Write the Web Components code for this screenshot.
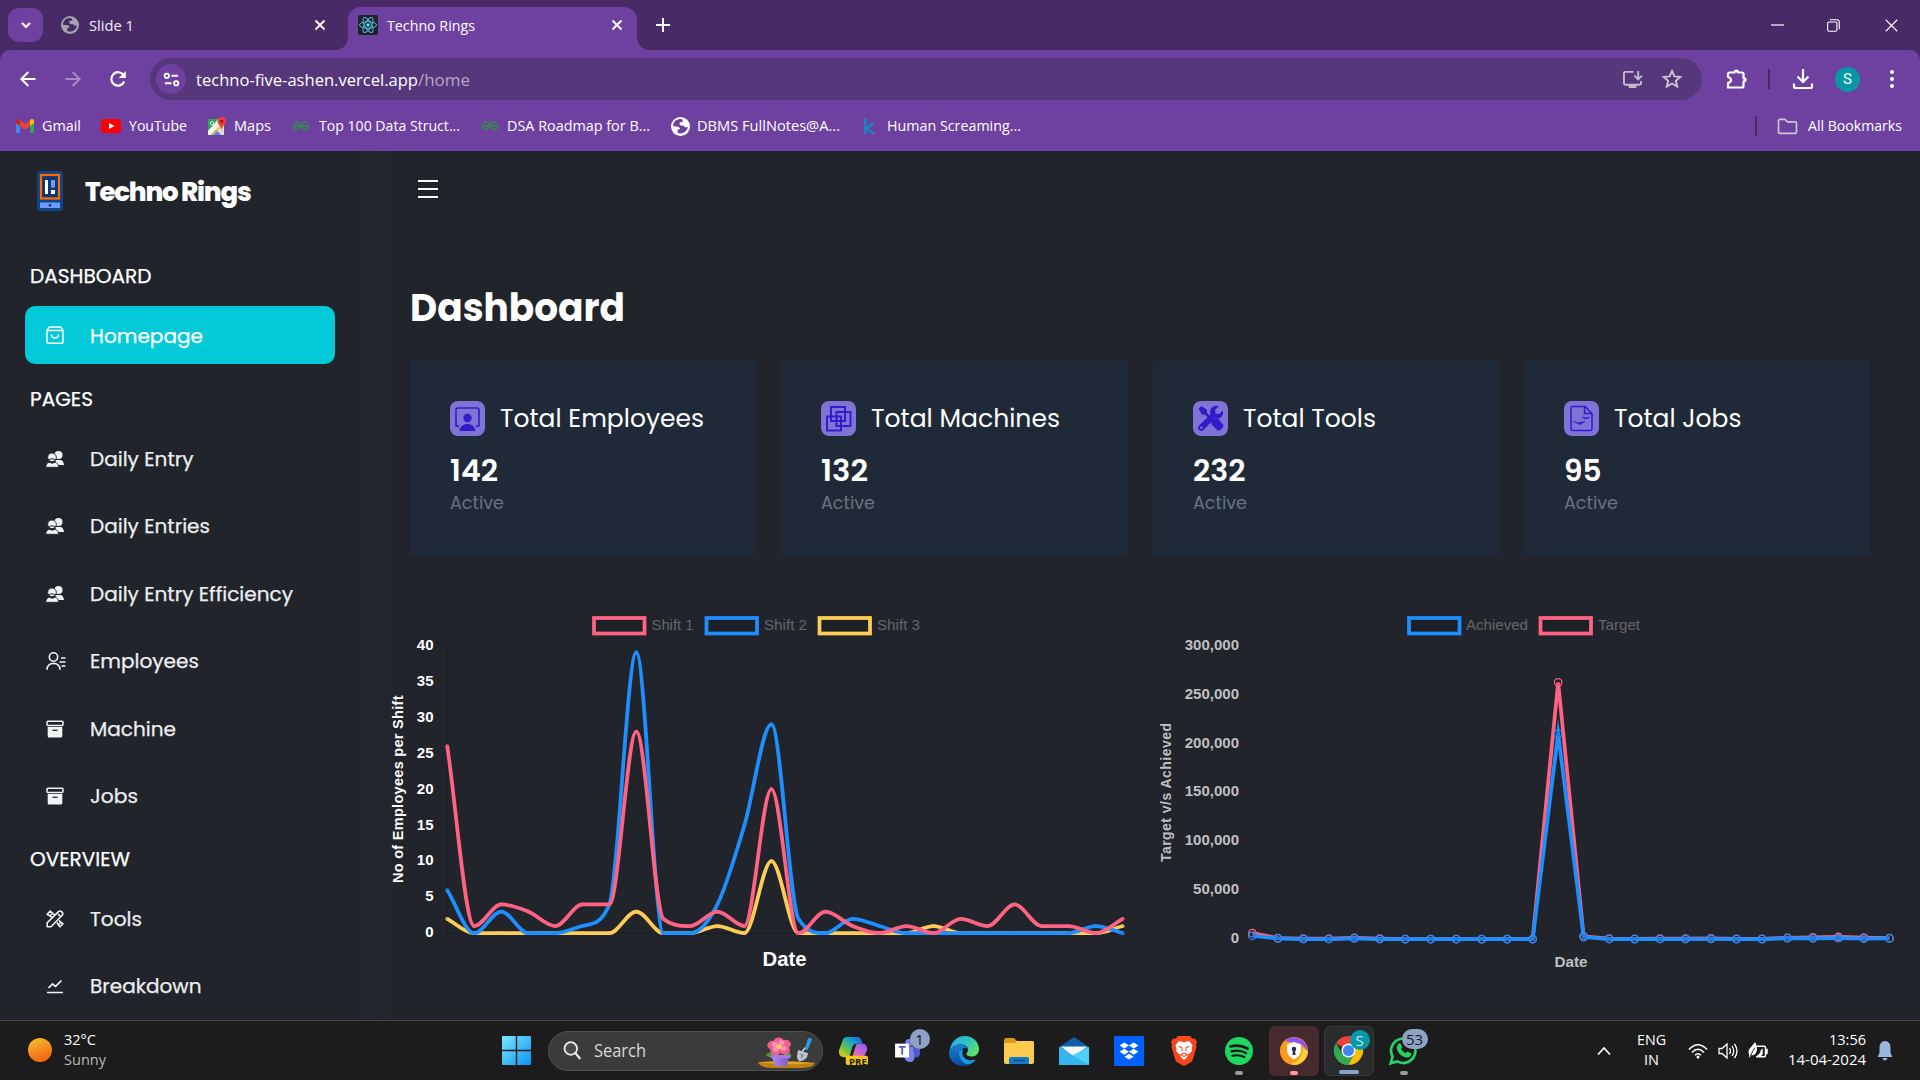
<!DOCTYPE html>
<html lang="en">
<head>
<meta charset="utf-8">
<title>Techno Rings</title>
<style>
html,body{margin:0;padding:0;width:1920px;height:1080px;overflow:hidden;background:#21242b}
</style>
</head>
<body>
<desktop-screen></desktop-screen>
<script>
const define = (name, html, setup) => customElements.define(name, class extends HTMLElement {
  connectedCallback() {
    if (this.shadowRoot) return;
    const root = this.attachShadow({ mode: 'open' });
    root.innerHTML = typeof html === 'function' ? html(this) : html;
    if (setup) setup(this, root);
  }
});

/* Text squeezed or stretched to an exact advance width */
define('fit-text', `<style>:host{display:inline-block;white-space:nowrap;flex:none}span{display:inline-block;transform-origin:0 50%}</style><span><slot></slot></span>`,
  (el, root) => {
    const s = root.querySelector('span'), w = +el.getAttribute('w');
    const n = s.offsetWidth;
    el.style.width = w + 'px';
    if (n) s.style.transform = `scaleX(${w / s.getBoundingClientRect().width})`;
  });

const ICONS = {
  chevdown: ['0 0 20 20', `<path d="M6 8l4 4 4-4" fill="none" stroke="#fff" stroke-width="2.2"/>`],
  globe: ['0 0 20 20', `<circle cx="10" cy="10" r="10" fill="currentColor"/><path d="M9.5 2.2C5 2.300 2.200 6 2.200 9.800L6 10c2 .2 3.500 1 3.500 3H7v3.700c4 2 10-1 10.700-6.200-2 .8-4 .3-4.500-1.500-2.500.5-4.700-.5-4.200-2.500.3-1.500 2-1 3.500-1.500 0-1.200-.5-2-1-2.600z" fill="var(--cut,#472a66)"/>`],
  close: ['0 0 12 12', `<path d="M1.500 1.500l9 9m0-9l-9 9" stroke="#fff" stroke-width="1.900"/>`],
  plus: ['0 0 14 14', `<path d="M7 0v14M0 7h14" stroke="#fff" stroke-width="2"/>`],
  react: ['0 0 20 20', `<rect width="20" height="20" rx="2" fill="#20232a"/><g fill="none" stroke="#53c1de" stroke-width="1"><ellipse cx="10" cy="10" rx="8.500" ry="3.300"/><ellipse cx="10" cy="10" rx="8.500" ry="3.300" transform="rotate(60 10 10)"/><ellipse cx="10" cy="10" rx="8.500" ry="3.300" transform="rotate(120 10 10)"/></g><circle cx="10" cy="10" r="1.700" fill="#61dafb"/>`],
  back: ['0 0 16 16', `<path d="M15.500 8H1.500M8.300 1L1.400 8l6.900 7" fill="none" stroke="currentColor" stroke-width="2.100"/>`],
  fwd: ['0 0 16 16', `<path d="M.5 8h14M7.700 1l6.900 7-6.900 7" fill="none" stroke="currentColor" stroke-width="2"/>`],
  reload: ['0 0 18 18', `<path d="M15.200 11.500A6.700 6.700 0 1 1 14.600 5.200" fill="none" stroke="#fff" stroke-width="2.200"/><path d="M16.800 1v7h-7z" fill="#fff"/>`],
  tune: ['0 0 18 16', `<g fill="none" stroke="#fff" stroke-width="2"><circle cx="4" cy="4" r="2.300"/><path d="M9 4h7M2 12h7"/><circle cx="14" cy="12" r="2.300"/></g>`],
  install: ['0 0 22 20', `<g fill="none" stroke="#c3bcca" stroke-width="2"><path d="M12 2H3.500Q2 2 2 3.500V14q0 1.500 1.500 1.500h15Q20 15.500 20 14v-2.500"/><path d="M17 1v8.500M13 6l4 4 4-4"/></g><path d="M7 15.500h8V19H7z" fill="#c3bcca"/>`],
  star: ['0 0 20 20', `<path d="M10 2l2.400 5.400 5.900.5-4.500 3.900 1.400 5.800-5.200-3.100-5.200 3.100 1.400-5.800L1.700 7.900l5.900-.5z" fill="none" stroke="#cbc6d0" stroke-width="1.900"/>`],
  puzzle: ['0 0 22 22', `<path d="M3.500 4.500h4.700a2.200 2.200 0 0 1 4.200 0h3.600Q17.500 4.500 17.500 6v3.600a2.200 2.200 0 0 1 0 4.200V18q0 1.500-1.500 1.500H2V15q3-.8 3-3T2 9V6q0-1.500 1.500-1.500z" fill="none" stroke="#fff" stroke-width="2.200"/><path d="M8 4.500c0-4 5-4 5 0zM17.500 9.500c4.500 0 4.500 4.500 0 4.500z" fill="#fff"/>`],
  download: ['0 0 20 20', `<path d="M10 0v12.500M4.500 7.500l5.500 5.500 5.500-5.500M1 14.500v3Q1 19 2.500 19h15q1.500 0 1.500-1.500v-3" fill="none" stroke="#fff" stroke-width="2.200"/>`],
  dots: ['0 0 6 20', `<g fill="#fff"><circle cx="3" cy="3" r="2"/><circle cx="3" cy="10" r="2"/><circle cx="3" cy="17" r="2"/></g>`],
  min: ['0 0 14 14', `<path d="M0 7h13" stroke="#fff" stroke-width="1.200"/>`],
  max: ['0 0 14 14', `<rect x=".7" y="3.200" width="10" height="10" rx="1.500" fill="none" stroke="#fff" stroke-width="1.200"/><path d="M3 .8h7.500Q13.200.8 13.200 3.500V11" fill="none" stroke="#fff" stroke-width="1.200"/>`],
  winclose: ['0 0 14 14', `<path d="M.8.8l12.400 12.400m0-12.400L.8 13.200" stroke="#fff" stroke-width="1.200"/>`],
  gmail: ['0 0 18 14', `<path d="M0 2.200V12.500q0 1.500 1.500 1.500H4V5z" fill="#4285f4"/><path d="M18 2.200V12.500q0 1.500-1.500 1.500H14V5z" fill="#34a853"/><path d="M4 1.200V7l5 3.800L14 7V1.200L9 5z" fill="#ea4335"/><path d="M0 2.200v2L4 7V1.200l-.8-.7C2-.4 0 .3 0 2.200z" fill="#c5221f"/><path d="M18 2.200v2L14 7V1.200l.8-.7C16-.4 18 .3 18 2.200z" fill="#fbbc04"/>`],
  youtube: ['0 0 20 14', `<rect width="20" height="14" rx="3" fill="#f00"/><path d="M8 4l5.500 3L8 10z" fill="#fff"/>`],
  maps: ['0 0 18 18', `<rect y="2" width="16" height="16" rx="1" fill="#ece9e6"/><path d="M0 3q0-1 1-1h9L0 14z" fill="#2fa457"/><path d="M0 14L11 4l2 2L2 18H1q-1 0-1-1z" fill="#f6f5f1"/><path d="M12.500 8L16 12v5q0 1-1 1h-3L8 12.500z" fill="#dcd9d6"/><path d="M8 12.500L13 18H3z" fill="#4285f4"/><path d="M5.800 14.800L13.500 7l1.500 1.800L5.500 18H2.600z" fill="#fbc02d" opacity=".75"/><path d="M13.700 0a4.200 4.200 0 0 0-4.200 4.200c0 3 3.200 4.300 4.200 8.300 1-4 4.200-5.300 4.200-8.300A4.200 4.200 0 0 0 13.700 0z" fill="#ea4335"/><circle cx="13.700" cy="4.200" r="1.500" fill="#8b1a12"/><circle cx="4" cy="6.200" r="1.700" fill="none" stroke="#fff" stroke-width=".8"/>`],
  gfg: ['0 0 18 10', `<g fill="none" stroke="#2f8d46" stroke-width="1.500"><path d="M2 2.500C5-.5 8.500 1.500 8 5c-.5 4-5.500 4.500-6.600 1.200-.2-.5-.4-1 .1-1.200h15c.5.200.3.700.1 1.200C15.500 9.500 10.500 9 10 5c-.5-3.500 3-5.500 6-2.500"/></g>`],
  kag: ['0 0 12 18', `<path d="M1.500 0v18M10.500 5.500L3 12l8 5.500" fill="none" stroke="#128fc0" stroke-width="2.300"/>`],
  folder: ['0 0 22 18', `<path d="M1.500 3q0-1.500 1.500-1.500h5.500l2.500 2.700h8q1.500 0 1.500 1.500v9q0 1.500-1.500 1.500H3q-1.500 0-1.500-1.500z" fill="none" stroke="#cbc6d0" stroke-width="1.800"/>`],
  brand: ['0 0 26 40', `<rect width="26" height="40" rx="3" fill="#0f4487"/><rect x="4" y="4" width="18" height="23.500" fill="none" stroke="#ff6a00" stroke-width="2.200"/><rect x="5.500" y="5.500" width="15" height="20.500" fill="#12366b"/><path d="M8 9h3v14H8z" fill="#fff"/><path d="M14 9h4v7.500h-4z" fill="#6a9bff"/><path d="M14 19h4v4h-4z" fill="#fff"/><rect x="3" y="31.500" width="20" height="5.500" fill="#6a9bff"/><circle cx="13" cy="34.300" r="1.400" fill="#12366b"/>`],
  menu: ['0 0 20 18', `<path d="M0 1h20M0 9h20M0 17h20" stroke="#fff" stroke-width="1.800"/>`],
  bag: ['0 0 18 18', `<g fill="none" stroke="#fff" stroke-width="1.500"><path d="M3.500 1h11L17 4.300V16q0 1.200-1.200 1.200H2.200Q1 17.200 1 16V4.300z"/><path d="M1 4.500h16M5.400 8.300a3.600 3.600 0 0 0 7.200 0"/></g>`],
  people: ['0 0 18 18', `<g fill="#f2f3f5"><circle cx="12.500" cy="5" r="4"/><path d="M9.500 10h5.500q2.500 1 3 5H10z"/></g><g fill="#f2f3f5" stroke="#21242b" stroke-width=".9"><circle cx="6" cy="7.300" r="4.300"/><path d="M-.3 17.300c.3-3.300 1.500-4.300 3.500-5q3 1.700 6 0c2 .7 3.200 1.700 3.500 5z"/></g><path d="M3.200 9.500q2.800-1.500 5.600 0" stroke="#21242b" stroke-width="1" fill="none"/>`],
  userlist: ['0 0 20 18', `<g fill="none" stroke="#f2f3f5" stroke-width="1.600"><circle cx="7.500" cy="5" r="4.200"/><path d="M1 17.700c0-8.500 13-8.500 13 0M15 6h4.500M13.500 10h6M15.500 14h4"/></g>`],
  archive: ['0 0 18 18', `<path d="M1.700 7h14.600v9q0 1.500-1.500 1.500H3.200q-1.500 0-1.500-1.500z" fill="#f2f3f5"/><rect x="1" y="1.300" width="16" height="4.200" rx="1" fill="none" stroke="#f2f3f5" stroke-width="1.500"/><path d="M6.500 10.300h5" stroke="#21242b" stroke-width="1.300"/>`],
  tools: ['0 0 18 18', `<g fill="none" stroke="#f2f3f5" stroke-width="1.600" stroke-linejoin="round"><path d="M1.200 16.800v-4L12.500 1.600q1.600-1.300 3.300.2t.4 3.400L5 16.800z"/><path d="M6.500 7.500L1.200 4.200 4.200 1l4.600 4.300M3.800 6l2-2M10.800 12.500L14 16.800l3-3-4.300-3.300M12.500 14.500l2.300-2.300M12 4l2.500 2.500"/></g>`],
  trend: ['0 0 18 18', `<path d="M1 15.500h16M2.500 11l4-4 3 2.300 6-5.800" fill="none" stroke="#f2f3f5" stroke-width="1.700"/>`],
  c1: ['0 0 35 35', `<path d="M7 25.500q-1 0-1-1V9q0-2 2-2h19q2 0 2 2v15.500q0 1-1 1" fill="none" stroke="#301cc9" stroke-width="1.600"/><circle cx="17.500" cy="17" r="4.200" fill="#301cc9"/><path d="M9.500 30c.5-9.500 15.500-9.500 16 0zM6 24h3v3zM29 24h-3v3z" fill="#301cc9"/>`],
  c2: ['0 0 35 35', `<g fill="none" stroke="#301cc9" stroke-width="1.900"><rect x="10" y="6" width="14" height="14"/><rect x="15.500" y="11" width="14" height="14"/><rect x="6" y="15.500" width="14" height="14"/></g>`],
  c3: ['0 0 35 35', `<g fill="#301cc9"><path d="M5.500 7.500L8.500 5l5.500 3.700v3l4.200 4.200-2 2L12 13.700H9z"/><path d="M18.500 19.500l3-2q3-.5 4.500 1l4 5q1 2-1.500 4.500t-4.500 1l-5-5q-1.500-2-.5-4.500z"/><path d="M29.800 9.500q1 4-1.500 6.500t-6.500 1.300L10.500 29q-2.500 2-4.500 0t0-4.500L17.500 13.500Q16.200 9 18.800 6.500T26 5l-4 4 .5 3.500 3.500.5z"/></g><circle cx="8.300" cy="26.800" r="1.300" fill="#8073d6"/>`],
  c4: ['0 0 35 35', `<path d="M7 7q0-1.500 1.500-1.500h12.500l7 7V28q0 1.500-1.500 1.500h-18Q7 29.500 7 28zM20.500 5.500V12.500H28" fill="none" stroke="#301cc9" stroke-width="1.500"/><path d="M9.500 20.500l5 1.500 2-1 4.500-.3-2.500 1.300-2 1.700-3-1.200zM18 16.300l3.500.4 4-.5-2 1.500-2.500.2z" fill="#301cc9" stroke="#301cc9" stroke-width=".6"/>`],
  win: ['0 0 29 29', `<defs><linearGradient id="w" x2="1" y2="1"><stop stop-color="#7ce7fd"/><stop offset="1" stop-color="#0b93f2"/></linearGradient></defs><path d="M0 1q0-1 1-1h12.800v13.800H0zM15.200 0H28q1 0 1 1v12.800H15.200zM0 15.200h13.800V29H1q-1 0-1-1zM15.200 15.200H29V28q0 1-1 1H15.200z" fill="url(#w)"/>`],
  search: ['0 0 18 19', `<circle cx="7.800" cy="7.500" r="6.300" fill="#4a4a4a" stroke="#eee" stroke-width="1.800"/><path d="M12.300 12l5 6" stroke="#eee" stroke-width="2"/>`],
  flower: ['0 0 58 38" preserveAspectRatio="none', `<defs><linearGradient id="p" x2="1"><stop stop-color="#b18cf2"/><stop offset="1" stop-color="#7a52c8"/></linearGradient></defs><path d="M0 31q27-3 58 1-1 6-14 6H14Q2 37.500 0 31z" fill="#c0820f"/><path d="M0 31q27-3 58 1-20 3-58-1z" fill="#dda22b"/><path d="M8 21q6-5 10 3-7 3-10-3zM34 24q-1-7-6-7l-3 8z" fill="#4a9c33"/><path d="M14 24h18l-3 12H17z" fill="url(#p)"/><rect x="13" y="22" width="20" height="4" rx="1" fill="#a47ce8"/><g fill="#ee5f8c"><circle cx="15" cy="10" r="5.500"/><circle cx="21" cy="6" r="5.500"/><circle cx="28" cy="9" r="5.500"/><circle cx="27" cy="16" r="5.500"/><circle cx="18" cy="17" r="5.500"/></g><g fill="#f993b4"><circle cx="17" cy="9" r="3"/><circle cx="24" cy="7" r="3"/><circle cx="26" cy="14" r="3"/><circle cx="18" cy="15" r="3"/></g><circle cx="21.500" cy="12" r="2.700" fill="#ffd15c"/><path d="M47.500 15l3-12q1-2.500 3-1.500t1 3L50.500 16z" fill="#2c9be6"/><path d="M41 16l10 4q-1 9-9 10-4-5-1-14z" fill="#bfc6cc"/><path d="M43 20l4 2-3 6z" fill="#8b949c"/><path d="M45 18l3-5" stroke="#ddd" stroke-width="1.500"/>`],
  copilot: ['0 0 30 30', `<defs><linearGradient id="c1" x1="0" y1="1" x2="1" y2="0"><stop stop-color="#ffcf00"/><stop offset=".35" stop-color="#6cc148"/><stop offset=".65" stop-color="#16a6cf"/><stop offset="1" stop-color="#2354d8"/></linearGradient><linearGradient id="c2" x1="1" y1="0" x2="0" y2="1"><stop stop-color="#7a63f0"/><stop offset=".5" stop-color="#d863cf"/><stop offset="1" stop-color="#ff7a59"/></linearGradient></defs><path d="M8 1h11q3 0 4 3l1.500 4H18q-3 0-4 3l-3.500 11H5q-6-1-5-7L4 4q1-3 4-3z" fill="url(#c1)"/><path d="M19 8h6q5 1 4 7l-3 6q-1 4-5 4H9q4-1 5-4l3-10q.5-2.500 2-3z" fill="url(#c2)"/><rect x="7" y="20.500" width="23" height="9.500" rx="2" fill="#f5c518"/>`],
  teams: ['0 0 28 26', `<circle cx="15" cy="4" r="4" fill="#7b83eb"/><path d="M10 8h11v13q-1 4-5 4t-6-5z" fill="#7b83eb"/><path d="M19 8h8v8q-1 5-6 4z" fill="#5059c9"/><rect y="5" width="15" height="15" fill="#fff"/><path d="M4 8.500h7.400M7.700 8.500V17" stroke="#5059c9" stroke-width="2"/>`],
  edge: ['0 0 30 30', `<defs><linearGradient id="e1" x2="1" y2=".6"><stop stop-color="#2aa9e8"/><stop offset=".55" stop-color="#2dc2c4"/><stop offset="1" stop-color="#5ee06a"/></linearGradient><linearGradient id="e2" y2="1" x2=".2"><stop stop-color="#1785d8"/><stop offset="1" stop-color="#0b4a98"/></linearGradient></defs><path d="M1 13C3 4 9 0 15.500 0 24 0 30 6 30 13c0 5-3.500 7.500-7.500 7.500-3.500 0-5-1-5-2.500s1.500-1.500 1.500-4.500c0-3-3-5-7-5C6 8.500 2 11 1 15z" fill="url(#e1)"/><path d="M12.500 8.500C5 8.500 0 12 0 17.500 0 25 7 30 14 30c5 0 10-2 12.500-6-3 1.500-9 2-12.500-1.500-3.500-3-3-9 1.500-10.500 2-.5 3.500 1 3.500 2-.5-3-3-5.500-6.500-5.500z" fill="url(#e2)"/><path d="M10 16c0 5 3 12 9.500 12.300 3-1 5.500-2.300 7-4.800-3 1.500-8.500 1-11.500-2-2-2-2-5.500-1-7.500-2 0-4 .5-4 2z" fill="#1a9be0"/>`],
  files: ['0 0 30 28', `<path d="M0 4Q0 1 2 1h8l3 3h15q2 0 2 2v4H0z" fill="#d99a16"/><path d="M0 7q0-1 1-1h10l2-2h15q2 0 2 2v19q0 2-2 2H2q-2 0-2-2z" fill="#fccb4d"/><path d="M5 27v-5q0-2 2-2h16q2 0 2 2v5z" fill="#0f7cd0"/><path d="M9 23.500h12" stroke="#0a4f8c" stroke-width="1.500"/>`],
  mail: ['0 0 30 29', `<path d="M0 11L15 1l15 10v5H0z" fill="#0f5fa8"/><path d="M0 11h30v17q0 1-1 1H1q-1 0-1-1z" fill="#2aa8e4"/><path d="M2 10.500h26L15 21z" fill="#f3f6fa"/><path d="M30 11v17q0 1-1 1L13 19.500z" fill="#4fd0f6"/><path d="M0 11l29 18H1q-1 0-1-1z" fill="#36b5ee"/>`],
  dropbox: ['0 0 30 30', `<rect width="30" height="30" fill="#0061fe"/><path d="M10.300 6.500l4.700 3-4.700 3-4.700-3zM19.700 6.500l4.700 3-4.700 3-4.700-3zM10.300 12.800l4.700 3-4.700 3-4.700-3zM19.700 12.800l4.700 3-4.700 3-4.700-3zM15 17.800l4.600 2.900-4.600 2.900-4.600-2.900z" fill="#fff"/>`],
  brave: ['0 0 26 30', `<path d="M7 0h12l2.500 2.800 2.500-.4 2 3.600-1 3 .5 2-3.500 12q-.5 2-2 3.300L13 30l-7-3.700Q4.500 25 4 23L.5 11 1 9 0 6l2-3.600 2.500.4z" fill="#f9451e"/><path d="M8 5l5 1.300L18 5l3.500 4-1 3.500.5 2.500-4 4-.5 1.500L13 24l-3.500-3.500L9 19l-4-4 .5-2.500-1-3.500z" fill="#fff"/><path d="M7.500 10.300l3.500 1.500v3.500M18.500 10.300l-3.500 1.500v3.500M9.500 18.500L13 17l3.500 1.500L13 20.500z" stroke="#f9451e" stroke-width="1.100" fill="none"/>`],
  spotify: ['0 0 28 28', `<circle cx="14" cy="14" r="14" fill="#1ed760"/><g fill="none" stroke="#181818" stroke-linecap="round"><path d="M5.500 9.500q9-2.500 17 2" stroke-width="2.800"/><path d="M6.500 14.300q8-2 14.500 1.700" stroke-width="2.300"/><path d="M7.300 18.700q6.700-1.600 12 1.300" stroke-width="2"/></g>`],
  shield: ['0 0 28 28', `<circle cx="14" cy="14" r="14" fill="#ff9a1f"/><path d="M5 4Q13-3 22 3q6 5 6 12-5-9-12-9Q9 5 5 4z" fill="#8a55f2"/><path d="M28 14q-1 10-10 13.500-4 .8-7-.5 11-3 12-16z" fill="#ffd23a"/><path d="M14 5l7 2.500v6.500q-1 5.500-7 8.500-6-3-7-8.500V7.500z" fill="#fff"/><circle cx="14" cy="12" r="2.200" fill="#33264d"/><path d="M13 12h2l.5 6h-3z" fill="#33264d"/>`],
  chrome: ['0 0 30 30', `<path d="M15 15L2 7.500A15 15 0 0 1 28 7.500z" fill="#ea4335"/><path d="M15 15L28 7.500A15 15 0 0 1 15 30z" fill="#fbbc04"/><path d="M2 7.500L8.500 19 15 30A15 15 0 0 1 2 7.500z" fill="#34a853"/><path d="M15 8h13.300Q31 14 29 20l-7-3-7 13 6-11z" fill="#fbbc04"/><path d="M2 7.500l6.500 11.200L15 22l5.500-2.500L15 30A15 15 0 0 1 2 7.500z" fill="#34a853"/><circle cx="15" cy="15" r="7.300" fill="#fff"/><circle cx="15" cy="15" r="5.700" fill="#4285f4"/>`],
  whatsapp: ['0 0 30 30', `<path d="M1.800 28.200l1.900-6.800a12.600 12.600 0 1 1 4.900 4.900z" fill="none" stroke="#25d366" stroke-width="2.800"/><path d="M9.500 8.500q1.500-2 2.700-.2l1.300 3q.2 1-1.200 2.200 1.500 3 5 4.300 1.500-2 2.300-1.600l3 1.500q.8.500.2 2.200-1.600 3-5 2.300-7-1.700-9.500-8-.9-3.500 1.200-5.700z" fill="#25d366"/>`],
  up: ['0 0 14 10', `<path d="M1 8.500l6-6.500 6 6.500" fill="none" stroke="#fff" stroke-width="1.700"/>`],
  wifi: ['0 0 20 16', `<g fill="none" stroke="#fff" stroke-width="1.500"><path d="M1 6.500q9-9.500 18 0M4 9.500q6-6.300 12 0M7 12.300q3-3.200 6 0"/></g><circle cx="10" cy="14" r="1.500" fill="#fff"/>`],
  volume: ['0 0 20 18', `<g fill="none" stroke="#fff" stroke-width="1.300"><path d="M1 6.500h3L9 2v14l-5-4.500H1z"/><path d="M11.500 6q2 3 0 6M14 4q3.500 5 0 10M16.500 2q5 7 0 14"/></g>`],
  battery: ['0 0 21 18', `<path d="M9 4.500h8q1.500 0 1.500 1.500v8q0 1.500-1.500 1.500H8.500M18.500 8h1.500v4h-1.500" fill="none" stroke="#fff" stroke-width="1.600"/><path d="M1 13q-1.500-4 1-6.500T7.500 0q3 6.500 1.300 10.500T3 14l-1.500 3z" fill="#fff"/><path d="M2.500 14.500L7 6" stroke="#1c1c1c" stroke-width="1"/><path d="M9 14.500q4-1.500 4.500-6l2-1.500v6l-2 2z" fill="#fff"/>`],
  bell: ['0 0 16 20', `<path d="M8 0q5.500.5 5.500 6.500V12l2 4H.5l2-4V6.500Q2.500.5 8 0z" fill="#9bb5dd"/><path d="M5.500 17h5q-.5 2.500-2.500 2.500T5.500 17z" fill="#9bb5dd"/>`]
};
define('ui-icon', el => {
  const [vb, body] = ICONS[el.getAttribute('n')];
  return `<style>:host{display:block;flex:none;width:${el.getAttribute('w')}px;height:${el.getAttribute('h') || el.getAttribute('w')}px}svg{display:block;width:100%;height:100%;overflow:visible}</style><svg viewBox="${vb}">${body}</svg>`;
});
const ic = (n, w, h, x = 0) => `<ui-icon n="${n}" w="${w}" h="${h || w}" style="margin-left:${x}px"></ui-icon>`;

/* ---------- browser chrome ---------- */
define('tab-strip', `<style>
:host{display:flex;height:50px;background:#472a66;color:#fff;font:15px/18px "Open Sans","Noto Sans",sans-serif;align-items:center;box-sizing:border-box}
.sr{width:35px;height:34px;border-radius:11px;background:#6e41a1;margin-left:8px;display:flex;align-items:center;justify-content:center}
.tab{display:flex;align-items:center;height:43px;box-sizing:border-box;padding-bottom:7px}
.idle{width:269px;margin-left:18px;height:50px;padding:0;color:#f3eef8}
.on{background:#6e41a1;width:289px;border-radius:13px 13px 0 0;align-self:flex-end;position:relative;margin-left:18px}
.on::before,.on::after{content:"";position:absolute;bottom:0;width:12px;height:12px;background:radial-gradient(circle at 0 0,#0000 11.500px,#6e41a1 12px)}
.on::before{left:-12px}.on::after{right:-12px;transform:scaleX(-1)}
.sp{flex:1}
</style>
<div class="sr">${ic('chevdown',20)}</div>
<div class="tab idle"><ui-icon n="globe" w="18" style="color:#a0a4ab"></ui-icon><fit-text w="45" style="margin-left:10px">Slide 1</fit-text><span class="sp"></span>${ic('close',12)}<span style="width:4px"></span></div>
<div class="tab on">${ic('react',20,20,10)}<fit-text w="88" style="margin-left:9px">Techno Rings</fit-text><span class="sp"></span>${ic('close',12)}<span style="width:14px"></span></div>
${ic('plus',14,14,19)}<span class="sp"></span>
${ic('min',14)}${ic('max',13,13,42)}${ic('winclose',13,13,45)}<span style="width:22px"></span>`);

define('nav-toolbar', `<style>
:host{display:flex;height:58px;background:#6e41a1;align-items:center;border-radius:10px 10px 0 0;color:#fff;font:17px/22px "Open Sans","Noto Sans",sans-serif}
.omni{display:flex;align-items:center;width:1552px;height:42px;border-radius:21px;background:#57377b;margin-left:23px;box-sizing:border-box}
.site{width:30px;height:30px;border-radius:50%;background:#6e41a1;margin-left:6px;display:flex;align-items:center;justify-content:center}
.sp{flex:1}.dim{color:#b7a5c9}
.div{width:2px;height:20px;background:#472a66;margin-left:20px}
.av{width:25px;height:25px;border-radius:50%;background:#0797a7;display:flex;align-items:center;justify-content:center;font:15px/25px Roboto,sans-serif;margin-left:22px}
</style>
${ic('back',16,16,20)}<ui-icon n="fwd" w="16" style="margin-left:29px;color:#a98ac8"></ui-icon>${ic('reload',18,18,28)}
<div class="omni"><div class="site">${ic('tune',17,15)}</div><fit-text w="222" style="margin:1px 0 0 10px">techno-five-ashen.vercel.app</fit-text><fit-text class="dim" w="52" style="margin-top:1px">/home</fit-text><span class="sp"></span>${ic('install',21,19)}${ic('star',20,20,19)}<span style="width:20px"></span></div>
${ic('puzzle',22,22,24)}<div class="div"></div>${ic('download',20,20,23)}<div class="av">S</div>${ic('dots',6,20,29)}`);

define('bookmark-item', el => `<style>:host{display:flex;align-items:center;flex:none}</style><slot name="icon"></slot><slot></slot>`);
const bm = (icon, w, h, x, gap, tw, label, st = '') => `<bookmark-item style="margin-left:${x}px"><ui-icon slot="icon" n="${icon}" w="${w}" h="${h}" style="${st}"></ui-icon><fit-text w="${tw}" style="margin:-2px 0 0 ${gap}px">${label}</fit-text></bookmark-item>`;
define('bookmark-bar', `<style>:host{display:flex;height:43px;box-sizing:border-box;background:#6e41a1;align-items:center;padding-bottom:7px;color:#fff;font:15px/20px "Open Sans","Noto Sans",sans-serif}.sp{flex:1}.div{width:2px;height:20px;background:#472a66}</style>
${bm('gmail',18,14,16,8,39,'Gmail')}${bm('youtube',20,14,20,8,58,'YouTube')}${bm('maps',18,18,21,8,37,'Maps')}${bm('gfg',18,10,21,9,141,'Top 100 Data Struct...')}${bm('gfg',18,10,21,8,143,'DSA Roadmap for B...')}${bm('globe',19,19,21,7,143,'DBMS FullNotes@A...','color:#fff;--cut:#6e41a1')}${bm('kag',11,18,24,12,134,'Human Screaming...')}
<span class="sp"></span><div class="div"></div>${bm('folder',21,17,20,10,94,'All Bookmarks')}<span style="width:18px"></span>`);

/* ---------- sidebar ---------- */
define('side-section', `<style>:host{display:flex;align-items:center;height:66px;box-sizing:border-box;padding:6px 0 0 30px;color:#fff;font:400 20px/28px Poppins,Inter,sans-serif;-webkit-text-stroke:.25px}</style><slot></slot>`);
define('side-link', el => `<style>:host{display:flex;align-items:center;height:58px;margin:0 25px 9.400px;border-radius:10px;color:#edeef0;font:400 20px/28px Poppins,Inter,sans-serif;-webkit-text-stroke:.25px}:host([active]){background:#04c9d9;color:#fff;margin-bottom:0}:host([last]){margin-bottom:0}ui-icon{margin-left:21px}.t{margin-left:26px;display:flex}:host([active]) .t{margin-top:2px}</style><ui-icon n="${el.getAttribute('icon')}" w="${el.getAttribute('icon')==='userlist'?20:18}" h="18" ></ui-icon><div class="t" style="${el.getAttribute('icon')==='userlist'?'margin-left:24px':''}"><slot></slot></div>`);
const link = (icon, w, t, a = '') => `<side-link icon="${icon}" ${a}><fit-text w="${w}">${t}</fit-text></side-link>`;
define('app-sidebar', `<style>:host{display:block;width:360px;flex:none;height:869px;overflow:hidden;background:#21242b}
.brand{display:flex;align-items:center;height:89px;box-sizing:border-box;padding:0 0 9px 37px;color:#fff;font:800 25.500px/34px Poppins,Inter,sans-serif}fit-text.b{margin:1px 0 0 22px;letter-spacing:-1.200px}</style>
<div class="brand">${ic('brand',26,40)}<fit-text class="b" w="165.5">Techno Rings</fit-text></div>
<side-section><fit-text w="121.500">DASHBOARD</fit-text></side-section>
${link('bag',113,'Homepage','active')}
<side-section style="padding-top:3px"><fit-text w="63">PAGES</fit-text></side-section>
${link('people',103.5,'Daily Entry')}${link('people',120,'Daily Entries')}${link('people',203,'Daily Entry Efficiency')}${link('userlist',109,'Employees')}${link('archive',86,'Machine')}${link('archive',48,'Jobs','last')}
<side-section style="height:65px;padding-top:3px"><fit-text w="100">OVERVIEW</fit-text></side-section>
${link('tools',52,'Tools')}${link('trend',111.5,'Breakdown')}`);

/* ---------- dashboard ---------- */
define('stat-card', el => {
  const a = k => el.getAttribute(k);
  return `<style>:host{display:block;flex:1;height:195px;box-sizing:border-box;padding:40px 40px 0 40px;background:#202937;color:#fff;font-family:Poppins,Inter,sans-serif}
.r{display:flex;align-items:center;gap:15px;height:35px}.i{width:35px;height:35px;border-radius:8px;background:#8073d6}
.n{font-weight:400;font-size:24.500px;line-height:35px}.v{display:flex;font-weight:600;font-size:30.500px;line-height:40px;margin-top:15px}.a{display:flex;font-size:17px;line-height:24px;color:#6b7280}</style>
<div class="r"><div class="i">${ic(a('icon'),35)}</div><fit-text class="n" w="${a('tw')}">${a('label')}</fit-text></div>
<div class="v"><fit-text w="${a('vw')}">${a('value')}</fit-text></div><div class="a"><fit-text w="54">Active</fit-text></div>`;
});

/* Monotone cubic interpolation through evenly spaced points */
function monotone(p) {
  const n = p.length, d = [], m = [];
  for (let i = 0; i < n - 1; i++) d.push((p[i + 1][1] - p[i][1]) / (p[i + 1][0] - p[i][0]));
  for (let i = 0; i < n; i++) m.push(i === 0 ? d[0] : i === n - 1 ? d[n - 2] : d[i - 1] * d[i] <= 0 ? 0 : (d[i - 1] + d[i]) / 2);
  for (let i = 0; i < n - 1; i++) {
    if (d[i] === 0) { m[i] = m[i + 1] = 0; continue; }
    const a = m[i] / d[i], b = m[i + 1] / d[i], s = a * a + b * b;
    if (s > 9) { const t = 3 / Math.sqrt(s); m[i] = t * a * d[i]; m[i + 1] = t * b * d[i]; }
  }
  let r = `M${p[0]}`;
  for (let i = 0; i < n - 1; i++) {
    const h = (p[i + 1][0] - p[i][0]) / 3;
    r += `C${p[i][0] + h},${p[i][1] + m[i] * h} ${p[i + 1][0] - h},${p[i + 1][1] - m[i + 1] * h} ${p[i + 1]}`;
  }
  return r;
}
const legend = (x, color, tx, tw, t) => `<rect x="${x + 2}" y="18" width="50.500" height="15.500" fill="rgba(0,0,0,.1)" stroke="${color}" stroke-width="3.750"/><text x="${tx}" y="30" textLength="${tw}" lengthAdjust="spacingAndGlyphs" fill="#666" font-size="15">${t}</text>`;
const CHART_CSS = `<style>:host{display:block;flex:none}svg{display:block;font-family:"Liberation Sans",Arial,sans-serif}.b{font-weight:700}</style>`;

/* svg origin: page (385, 600) */
define('shift-chart', () => {
  const S1 = [26,1,4,3,1,4,4,28,2,1,3,1,20,0,3,1,0,1,0,2,1,4,1,1,0,2];
  const S2 = [6,0,3,0,0,1,4,39,0,0,4,15,29,2,0,2,1,0,0,0,0,0,0,0,1,0];
  const S3 = [2,0,0,0,0,0,0,3,0,0,1,0,10,0,0,0,0,0,1,0,0,0,0,0,0,1];
  const x0 = 62.2, st = 27.02, y0 = 333.2, u = 7.2;
  const line = (s, c) => {
    const p = s.map((v, i) => [x0 + i * st, y0 - v * u]);
    return `<path d="${monotone(p)}" fill="none" stroke="${c}" stroke-width="3.750"/>` + p.map(q => `<circle cx="${q[0]}" cy="${q[1]}" r="1.250" fill="rgba(0,0,0,.1)" stroke="${c}" stroke-width="1.250"/>`).join('');
  };
  let t = '';
  for (let v = 0; v <= 40; v += 5) t += `<text class="b" x="48.500" y="${y0 - v * 7.18 + 4}" text-anchor="end" fill="#fff" font-size="15">${v}</text>`;
  return CHART_CSS + `<svg width="760" height="400">
  ${legend(207, '#ff6384', 266.5, 42, 'Shift 1')}${legend(319.5, '#1e8fff', 379, 43, 'Shift 2')}${legend(432.5, '#ffcd56', 492, 43, 'Shift 3')}
  <path d="M62.500 45v289M62 333.500h676" stroke="rgba(0,0,0,.2)" fill="none"/>
  ${t}${line(S3, '#ffcd56')}${line(S2, '#1e8fff')}${line(S1, '#ff6384')}
  <text class="b" transform="translate(17.500 283) rotate(-90)" x="0" y="0" font-size="14.500" fill="#fff" textLength="187.500" lengthAdjust="spacing">No of Employees per Shift</text>
  <text class="b" x="377.500" y="366" font-size="20" fill="#fff" textLength="44" lengthAdjust="spacingAndGlyphs">Date</text></svg>`;
});

/* svg origin: page (1145, 600) */
define('target-chart', () => {
  const T = [6300,1200,700,600,1500,700,300,300,300,300,300,300,262500,3000,600,500,600,700,900,500,500,1500,1900,2500,1700,1100];
  const A = [3600,900,300,300,1000,300,200,200,200,200,200,200,210000,2300,300,200,300,300,500,200,200,1100,1000,1100,700,900];
  const x0 = 107.4, st = 25.48, y0 = 339.3, u = 293.7 / 300000;
  const line = (s, c) => {
    const p = s.map((v, i) => [x0 + i * st, y0 - v * u]);
    return `<path d="M${p.join('L')}" fill="none" stroke="${c}" stroke-width="3.750" stroke-miterlimit="10"/>` + p.map(q => `<circle cx="${q[0]}" cy="${q[1]}" r="3.750" fill="rgba(0,0,0,.1)" stroke="${c}" stroke-width="1.250"/>`).join('');
  };
  let g = '', t = '';
  for (let i = 0; i < 26; i++) g += `M${Math.round(x0 + i * st) + .5} 45.500V349`;
  for (let i = 0; i < 7; i++) {
    const y = y0 - i * 48.95;
    g += `M97.500 ${Math.round(y) + .5}H744.500`;
    t += `<text class="b" x="94" y="${y + 4}" text-anchor="end" fill="#bfc0c2" font-size="15">${(i * 50000).toLocaleString('en-US')}</text>`;
  }
  return CHART_CSS + `<svg width="775" height="400">
  ${legend(262, '#1e8fff', 321, 62, 'Achieved')}${legend(393.5, '#ff6384', 453, 42, 'Target')}
  <path d="${g}" stroke="rgba(0,0,0,.11)" fill="none"/>${t}${line(T, '#ff6384')}${line(A, '#1e8fff')}
  <text class="b" transform="translate(25.500 262) rotate(-90)" font-size="14" fill="#bfc0c2" textLength="139" lengthAdjust="spacing">Target v/s Achieved</text>
  <text class="b" x="409.500" y="367" font-size="15" fill="#bfc0c2" textLength="33" lengthAdjust="spacingAndGlyphs">Date</text></svg>`;
});

define('dashboard-main', `<style>:host{display:block;width:1560px;height:869px;overflow:hidden;box-sizing:border-box;background:linear-gradient(90deg,#23262e,#21242b 40px)}
.top{height:75px;display:flex;align-items:center}
h1{margin:52px 0 0 50px;height:60px;display:flex;font:700 38px/60px Poppins,Inter,sans-serif;color:#fff}
.cards{display:flex;gap:25px;margin:23px 50px 0 50px}
.charts{display:flex;margin:44px 0 0 25px}</style>
<div class="top">${ic('menu',20,18,57.5)}</div>
<h1><fit-text w="215">Dashboard</fit-text></h1>
<div class="cards">
<stat-card icon="c1" label="Total Employees" tw="204" value="142" vw="48"></stat-card>
<stat-card icon="c2" label="Total Machines" tw="189" value="132" vw="47"></stat-card>
<stat-card icon="c3" label="Total Tools" tw="133" value="232" vw="52.5"></stat-card>
<stat-card icon="c4" label="Total Jobs" tw="127.5" value="95" vw="37.5"></stat-card></div>
<div class="charts"><shift-chart></shift-chart><target-chart></target-chart></div>`);

/* ---------- taskbar ---------- */
define('task-app', `<style>:host{display:flex;width:50px;height:50px;margin:0 2.500px;align-items:center;justify-content:center;position:relative;border-radius:6px;box-sizing:border-box;flex:none}
.badge{position:absolute;top:4px;left:0;height:20px;font:15px/20px "Open Sans",sans-serif}
.ind{position:absolute;bottom:1px;left:0;right:0;display:flex;justify-content:center}</style><slot></slot><div class="badge"><slot name="badge"></slot></div><div class="ind"><slot name="ind"></slot></div>`);
const ind = (w, c) => `<span slot="ind" style="width:${w}px;height:4px;border-radius:2px;background:${c}"></span>`;
const badge = (x, w, c, fg, t) => `<span slot="badge" style="display:block;margin:-1px 0 0 ${x}px;width:${w}px;height:20px;border-radius:10px;background:${c};color:${fg};text-align:center">${t}</span>`;
define('task-bar', `<style>:host{display:flex;height:60px;background:#1c1c1c;border-top:1px solid #444;box-sizing:border-box;align-items:center;color:#fff;font:15px/20px "Open Sans","Noto Sans",sans-serif}
.sun{width:24px;height:24px;border-radius:50%;background:linear-gradient(160deg,#f6c332,#f36a12 80%);margin:-2px 0 0 28px;flex:none}
.col{display:flex;flex-direction:column;flex:none;margin-top:-4px}
.search{display:flex;align-items:center;box-sizing:border-box;width:275px;height:40px;border-radius:20px;background:#3b3b3b;border:1px solid #505050;margin-left:17px;font-size:18px;color:#d8d8d8;flex:none}
.sp{flex:1}.pre{position:absolute;font:700 8px/9px "Open Sans",sans-serif;color:#1c1c1c;left:20px;top:31px}</style>
<div class="sun"></div><div class="col" style="margin-left:12px;width:436px"><fit-text w="32">32°C</fit-text><fit-text w="42" style="color:#b9b9b9">Sunny</fit-text></div>
<ui-icon n="win" w="29" style="margin-left:2px"></ui-icon>
<div class="search">${ic('search',18,19,14)}<fit-text w="52" style="margin:-1px 0 0 12.500px">Search</fit-text><span class="sp"></span><ui-icon n="flower" w="57" h="31" style="margin-top:3px"></ui-icon><span style="width:7px"></span></div>
<span style="width:3px"></span>
<task-app>${ic('copilot',29,29)}<span class="pre"><fit-text w="18">PRE</fit-text></span></task-app>
<task-app>${ic('teams',26,24,-2)}${badge(26,20,'#8da2c4','#15181d','1')}</task-app>
<task-app>${ic('edge',30)}</task-app>
<task-app>${ic('files',30,28)}</task-app>
<task-app>${ic('mail',30,29)}</task-app>
<task-app>${ic('dropbox',30)}</task-app>
<task-app>${ic('brave',26,30)}</task-app>
<task-app>${ic('spotify',28)}${ind(8,'#9a9a9a')}</task-app>
<task-app style="background:#472a2d">${ic('shield',28)}${ind(8,'#ff99a6')}</task-app>
<task-app style="background:#2a2b2d;border:1px solid #38393b">${ic('chrome',29)}${badge(25,20,'#0797a7','#bfe9ed','S')}${ind(20,'#8ba3c9')}</task-app>
<task-app>${ic('whatsapp',29)}${badge(23,26,'#8da2c4','#15181d','53')}${ind(8,'#9a9a9a')}</task-app>
<span class="sp"></span>
${ic('up',14,10)}<div class="col" style="margin-left:25.500px;width:30px;align-items:center"><fit-text w="29">ENG</fit-text><fit-text w="15">IN</fit-text></div>
${ic('wifi',20,16,22)}${ic('volume',20,18,10)}${ic('battery',20,17,10)}
<div class="col" style="width:98px;align-items:flex-end"><fit-text w="37">13:56</fit-text><fit-text w="78">14-04-2024</fit-text></div>
${ic('bell',16,20,11)}<span style="width:27px"></span>`);

define('desktop-screen', `<style>:host{display:flex;flex-direction:column;width:1920px;height:1080px;background:#21242b}
.strip{background:#472a66}.page{display:flex;height:869px}</style>
<tab-strip></tab-strip><div class="strip"><nav-toolbar></nav-toolbar></div><bookmark-bar></bookmark-bar>
<div class="page"><app-sidebar></app-sidebar><dashboard-main></dashboard-main></div><task-bar></task-bar>`);
</script>
</body>
</html>
